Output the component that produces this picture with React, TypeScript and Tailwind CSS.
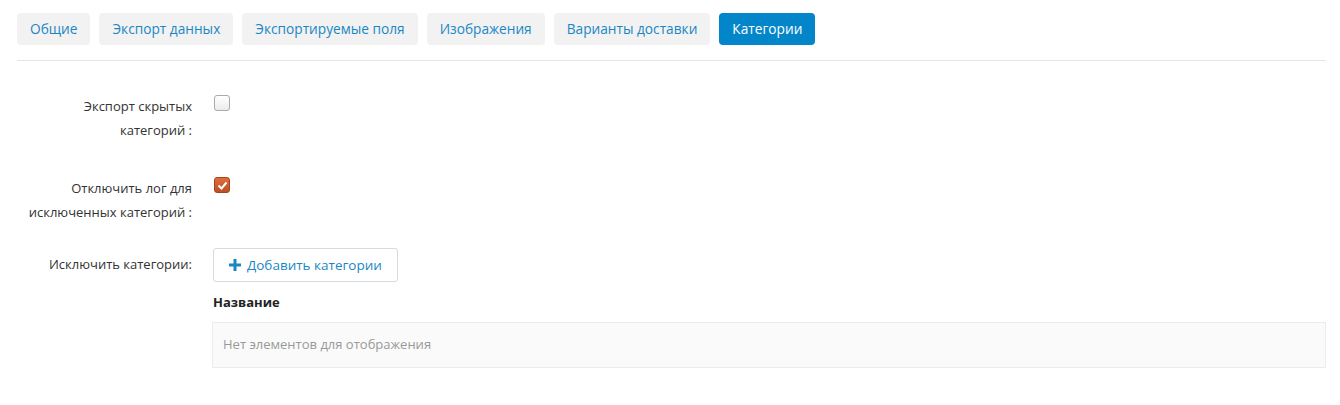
import { useState } from 'react';

const tabs = ['Общие', 'Экспорт данных', 'Экспортируемые поля', 'Изображения', 'Варианты доставки', 'Категории'];

export default function App() {
  const [active, setActive] = useState('Категории');
  const [hidden, setHidden] = useState(false);
  const [noLog, setNoLog] = useState(true);

  return (
    <div className="min-h-[405px] bg-white pl-[17px] pr-[14px] pt-[13px] text-[13px] text-[#333]" style={{ fontFamily: '"Open Sans", "DejaVu Sans", sans-serif' }}>
      <div className="flex gap-[9px] pb-[15px] border-b border-[#e1e6ec]">
        {tabs.map((t) => (
          <button
            key={t}
            onClick={() => setActive(t)}
            className={`h-8 px-[13px] rounded-[4px] text-[13.7px] ${t === active ? 'bg-[#0386c9] text-white' : 'bg-[#f2f2f2] text-[#1a87c4]'}`}
          >
            {t}
          </button>
        ))}
      </div>

      <div className="pt-[33px]">
        <div className="flex h-[82px]">
          <div className="w-[175px] text-right leading-6">
            Экспорт скрытых<br />категорий :
          </div>
          <div className="pl-[22px] pt-[1px]">
            <Check checked={hidden} onChange={() => setHidden(!hidden)} />
          </div>
        </div>

        <div className="flex h-[72px]">
          <div className="w-[175px] text-right leading-6">
            Отключить лог для<br />исключенных категорий :
          </div>
          <div className="pl-[22px] pt-[1px]">
            <Check checked={noLog} onChange={() => setNoLog(!noLog)} />
          </div>
        </div>

        <div className="flex">
          <div className="w-[175px] text-right leading-6 pt-[4px]">Исключить категории:</div>
          <div className="flex-1 pl-[21px]">
            <button className="h-[34px] px-[15px] flex items-center gap-[6px] border border-[#d5dbe1] rounded-[3px] text-[13.5px] text-[#1a87c4] bg-white">
              <svg width="12" height="12" viewBox="0 0 12 12">
                <path d="M4.5 0h3v4.5H12v3H7.5V12h-3V7.5H0v-3h4.5z" fill="#1a87c4" />
              </svg>
              Добавить категории
            </button>
            <div className="pt-[11px] pb-[9px] font-bold text-[#222]">Название</div>
            <div className="h-[46px] -ml-px flex items-center px-[10px] bg-[#fafafa] border border-[#ececec] text-[#999]">
              Нет элементов для отображения
            </div>
          </div>
        </div>
      </div>
    </div>
  );
}

function Check({ checked, onChange }: { checked: boolean; onChange: () => void }) {
  return (
    <button
      onClick={onChange}
      className={`w-4 h-4 rounded-[3px] flex items-center justify-center ${checked ? 'bg-gradient-to-b from-[#de6d3c] to-[#bf4f24] border border-[#a8431f]' : 'bg-gradient-to-b from-white to-[#ececec] border border-[#aaa]'}`}
    >
      {checked && (
        <svg width="11" height="9" viewBox="0 0 11 9">
          <path d="M1.5 4.5l3 3 5-6" stroke="white" strokeWidth="2" fill="none" />
        </svg>
      )}
    </button>
  );
}
